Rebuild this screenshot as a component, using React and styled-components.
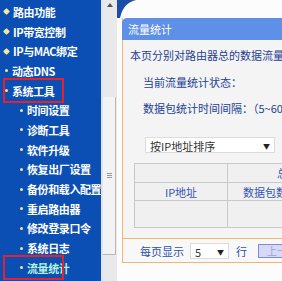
import styled, { createGlobalStyle } from 'styled-components'

const GlobalStyle = createGlobalStyle`
    html, body {
        margin: 0;
        padding: 0;
        background: #fff;
    }
    body {
        font-family: "Noto Sans CJK SC", "DejaVu Sans", sans-serif;
    }
`

const menu = [
    { label: '路由功能', level: 0, dot: 'plus' },
    { label: 'IP带宽控制', level: 0, dot: 'plus' },
    { label: 'IP与MAC绑定', level: 0, dot: 'plus' },
    { label: '动态DNS', level: 0 },
    { label: '系统工具', level: 0, marked: true },
    { label: '时间设置', level: 1 },
    { label: '诊断工具', level: 1 },
    { label: '软件升级', level: 1 },
    { label: '恢复出厂设置', level: 1 },
    { label: '备份和载入配置', level: 1 },
    { label: '重启路由器', level: 1 },
    { label: '修改登录口令', level: 1 },
    { label: '系统日志', level: 1 },
    { label: '流量统计', level: 1, marked: true, active: true },
]

function Sidebar() {
    return (
        <Side>
            {menu.map((m) => (
                <Item key={m.label} $level={m.level} $marked={m.marked} $active={m.active}>
                    <Bullet $plus={m.dot === 'plus'} />
                    {m.label}
                </Item>
            ))}
        </Side>
    )
}

function Scrollbar() {
    return (
        <Track>
            <svg width="14" height="10" viewBox="0 0 14 10">
                <path d="M4 7 L7 3 L10 7 Z" fill="#555" />
            </svg>
            <Thumb>
                <Grip />
            </Thumb>
        </Track>
    )
}

function App() {
    return (
        <>
            <GlobalStyle />
            <Page>
                <Sidebar />
                <Scrollbar />
                <Main>
                    <Corner>
                        <svg width="20" height="18" viewBox="0 0 20 18">
                            <path d="M0 0 L19 0 Q6 3 3 18 L0 18 Z" fill="#1b4ea6" />
                        </svg>
                    </Corner>
                    <Panel>
                        <Header>流量统计</Header>
                        <Body>
                            <Line>本页分别对路由器总的数据流量进行统计</Line>
                            <Line $indent $gap={9}>当前流量统计状态：</Line>
                            <Line $indent $gap={8}>数据包统计时间间隔：（5~60）</Line>
                            <Select $wide>
                                按IP地址排序
                                <Arrow>▼</Arrow>
                            </Select>
                            <Table>
                                <tbody>
                                    <Row $h={19}>
                                        <Cell $w={93}></Cell>
                                        <Cell $pad={49}>总计</Cell>
                                    </Row>
                                    <Row $h={18}>
                                        <Cell $w={93} $center>IP地址</Cell>
                                        <Cell $pad={15}>数据包数</Cell>
                                    </Row>
                                    <Row $h={27}>
                                        <Cell $w={93}></Cell>
                                        <Cell></Cell>
                                    </Row>
                                </tbody>
                            </Table>
                        </Body>
                        <Footer>
                            <Label>每页显示</Label>
                            <Select>
                                5
                                <Arrow>▼</Arrow>
                            </Select>
                            <Label>行</Label>
                            <PageButton>上一页</PageButton>
                        </Footer>
                    </Panel>
                </Main>
            </Page>
        </>
    )
}

const Page = styled.div`
    display: flex;
    width: 282px;
    height: 281px;
    overflow: hidden;
    background: #fff;
`

const Side = styled.div`
    width: 101px;
    flex-shrink: 0;
    background: #0b4fb4;
    padding-top: 2px;
    box-sizing: border-box;
    overflow: hidden;
`

const Item = styled.div`
    position: relative;
    display: flex;
    align-items: center;
    height: 19.7px;
    padding-left: ${(p) => (p.$level ? 19 : 4)}px;
    font-size: 11px;
    font-weight: bold;
    letter-spacing: -0.4px;
    white-space: nowrap;
    color: ${(p) => (p.$active ? '#b4f2da' : '#ffffff')};
    &::after {
        content: '';
        display: ${(p) => (p.$marked ? 'block' : 'none')};
        position: absolute;
        left: 3px;
        top: -3px;
        width: 61px;
        height: 25px;
        border: 2px solid #e4222c;
        box-sizing: border-box;
    }
`

const Bullet = styled.span`
    flex-shrink: 0;
    display: inline-block;
    width: ${(p) => (p.$plus ? 5 : 3)}px;
    height: ${(p) => (p.$plus ? 5 : 3)}px;
    margin-right: 4px;
    margin-left: ${(p) => (p.$plus ? 0 : 1)}px;
    background: #f2e89a;
    border-radius: ${(p) => (p.$plus ? '1px' : '50%')};
    transform: ${(p) => (p.$plus ? 'rotate(45deg)' : 'none')};
`

const Track = styled.div`
    width: 16px;
    flex-shrink: 0;
    display: flex;
    flex-direction: column;
    background: #e9e9ec;
    border-left: 2px solid #dfe3ea;
    box-sizing: border-box;
`

const Thumb = styled.div`
    margin-top: 87px;
    height: 158px;
    width: 13px;
    background: #f3f3f3;
    border-right: 1px solid #b9b9b9;
    border-bottom: 1px solid #b9b9b9;
    box-sizing: border-box;
    display: flex;
    align-items: center;
    justify-content: center;
`

const Grip = styled.div`
    width: 5px;
    height: 5px;
    border-top: 1px solid #999;
    border-bottom: 1px solid #999;
    box-sizing: border-box;
    background: linear-gradient(#999, #999) center / 100% 1px no-repeat;
`

const Main = styled.div`
    flex: 1;
    min-width: 0;
    display: flex;
    flex-direction: column;
    background: #fcfcfc;
`

const Corner = styled.div`
    height: 18px;
    line-height: 0;
`

const Panel = styled.div`
    margin-left: 5px;
    width: 220px;
    border-left: 1px solid #f4b56e;
    border-bottom: 1px solid #f4b56e;
    background: #f4f4f4;
`

const Header = styled.div`
    height: 22px;
    line-height: 22px;
    margin-left: -1px;
    padding-left: 6px;
    background: #5d90e6;
    border-top-left-radius: 5px;
    color: #fff;
    font-size: 11px;
`

const Body = styled.div`
    padding: 6px 0 10px 7px;
`

const Line = styled.div`
    height: 18px;
    line-height: 18px;
    margin-top: ${(p) => p.$gap || 0}px;
    padding-left: ${(p) => (p.$indent ? 13 : 0)}px;
    font-size: 11px;
    color: #1d3f93;
    white-space: nowrap;
`

const Select = styled.div`
    position: relative;
    height: 16px;
    line-height: 16px;
    width: ${(p) => (p.$wide ? 130 : 39)}px;
    margin: ${(p) => (p.$wide ? '20px 0 0 15px' : '0 7px 0 6px')};
    padding-left: 4px;
    box-sizing: border-box;
    background: #fff;
    border: 1px solid #dcdcdc;
    font-size: 11px;
    color: #333;
`

const Arrow = styled.span`
    position: absolute;
    right: 4px;
    top: 0;
    font-size: 7px;
    color: #222;
`

const Table = styled.table`
    margin: 10px 0 0 4px;
    border-collapse: collapse;
    background: #f0f0f0;
    width: 220px;
`

const Row = styled.tr`
    height: ${(p) => p.$h}px;
`

const Cell = styled.td`
    width: ${(p) => (p.$w ? `${p.$w}px` : 'auto')};
    padding: 0 0 0 ${(p) => p.$pad || 0}px;
    border: 1px solid #c9c9c9;
    text-align: ${(p) => (p.$center ? 'center' : 'left')};
    font-size: 11px;
    color: #3556b6;
    white-space: nowrap;
    box-sizing: border-box;
`

const Footer = styled.div`
    display: flex;
    align-items: center;
    height: 23px;
    padding-left: 17px;
    border-top: 1px solid #f4b56e;
    background: #f8f8f8;
`

const Label = styled.span`
    font-size: 11px;
    color: #2a50aa;
    white-space: nowrap;
`

const PageButton = styled.div`
    margin-left: 11px;
    height: 14px;
    line-height: 12px;
    padding: 0 8px;
    box-sizing: border-box;
    background: #d6daf8;
    border: 1px solid #8389d8;
    font-size: 10px;
    color: #9ba1d2;
    white-space: nowrap;
`

export default App
